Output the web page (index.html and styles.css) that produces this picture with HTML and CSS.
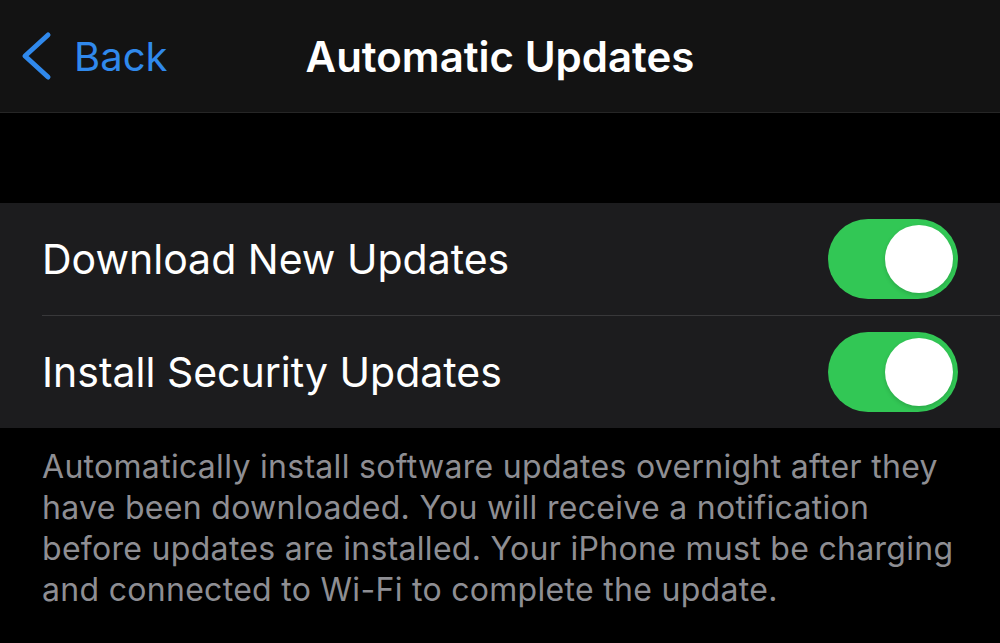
FILE: index.html
```html
<!DOCTYPE html>
<html lang="en">
<head>
    <meta charset="UTF-8">
    <title>Automatic Updates</title>
    <link rel="stylesheet" href="styles.css">
</head>
<body>
    <header class="nav-bar">
        <a class="back-link" href="#">
            <svg class="chevron" width="34" height="50" viewBox="0 0 34 50">
                <polyline points="28,4 5,25 28,46" fill="none" stroke="currentColor" stroke-width="5" stroke-linecap="round" stroke-linejoin="round"/>
            </svg>
            <span>Back</span>
        </a>
        <h1 class="nav-title">Automatic Updates</h1>
    </header>
    <main>
        <section class="group">
            <div class="row">
                <span class="row-label">Download New Updates</span>
                <label class="switch">
                    <input type="checkbox" checked>
                    <span class="knob"></span>
                </label>
            </div>
            <div class="row">
                <span class="row-label">Install Security Updates</span>
                <label class="switch">
                    <input type="checkbox" checked>
                    <span class="knob"></span>
                </label>
            </div>
        </section>
        <p class="group-footer">Automatically install software updates overnight after they have been downloaded. You will receive a notification before updates are installed. Your iPhone must be charging and connected to Wi-Fi to complete the update.</p>
    </main>
</body>
</html>
```

FILE: styles.css
```css
body {
    margin: 0;
    background-color: #000;
    color: #fff;
    font-family: Inter, "Noto Sans", sans-serif;
}
.nav-bar {
    position: relative;
    height: 112px;
    background-color: #131313;
    border-bottom: 1px solid #262626;
    display: flex;
    align-items: center;
    justify-content: center;
}
.back-link {
    position: absolute;
    left: 20px;
    top: 31px;
    display: flex;
    align-items: center;
    gap: 20px;
    color: #3089ec;
    text-decoration: none;
    font-size: 40px;
}
.chevron {
    display: block;
}
.nav-title {
    margin: 0;
    font-size: 42px;
    font-weight: 600;
    letter-spacing: 0;
}
main {
    padding-top: 90px;
}
.group {
    background-color: #1c1c1e;
}
.row {
    height: 112px;
    margin-left: 42px;
    padding-right: 42px;
    display: flex;
    align-items: center;
    justify-content: space-between;
}
.row + .row {
    border-top: 1px solid #38383a;
}
.row-label {
    font-size: 41px;
    font-weight: 400;
}
.switch {
    position: relative;
    width: 130px;
    height: 80px;
}
.switch input {
    display: none;
}
.knob {
    position: absolute;
    inset: 0;
    border-radius: 40px;
    background-color: #32c755;
}
.knob::after {
    content: "";
    position: absolute;
    top: 6px;
    right: 5px;
    width: 68px;
    height: 68px;
    border-radius: 50%;
    background-color: #fff;
    box-shadow: 0 2px 4px rgba(0, 0, 0, 0.15);
}
.group-footer {
    margin: 0;
    padding: 18px 42px 0;
    font-size: 32px;
    line-height: 41px;
    letter-spacing: 0.3px;
    color: #8e8e93;
}
```
